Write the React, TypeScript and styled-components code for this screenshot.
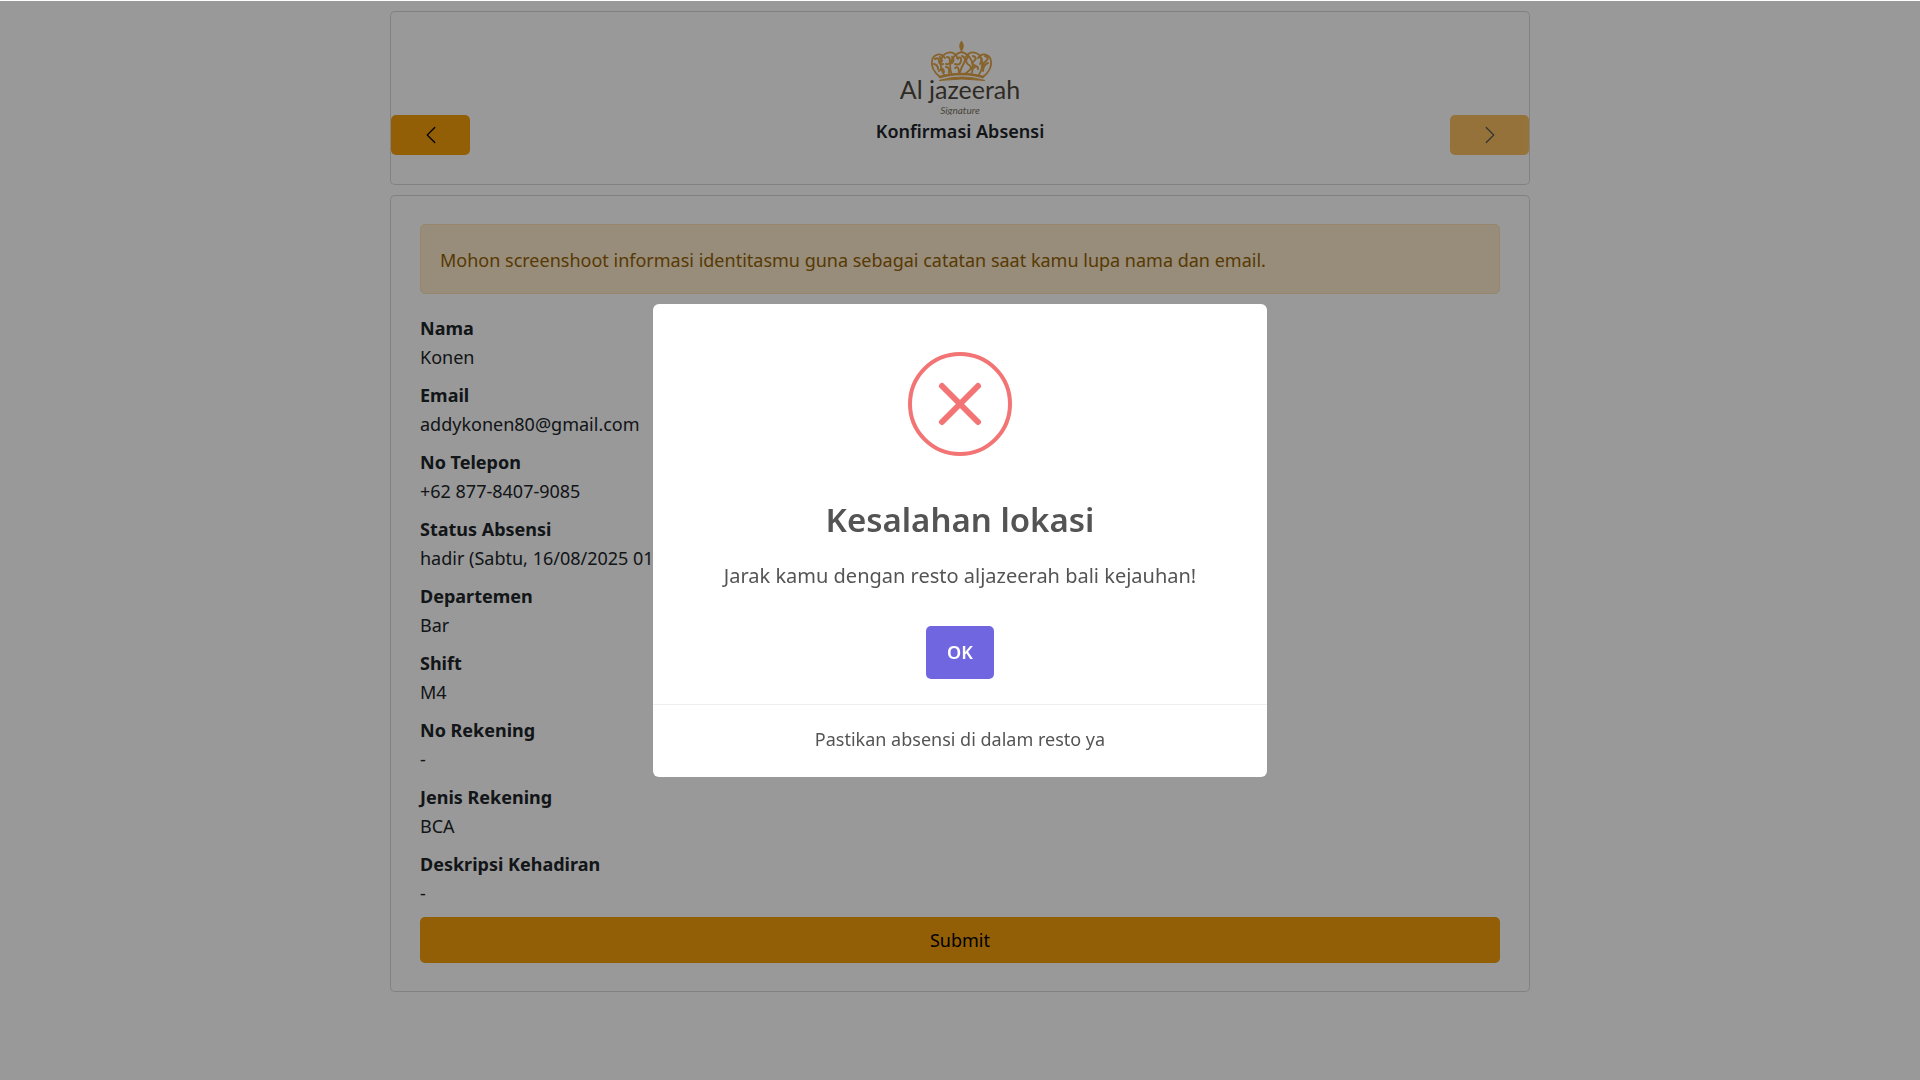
import React, { useState } from 'react';
import styled, { createGlobalStyle } from 'styled-components';

const GlobalStyle = createGlobalStyle`
  *, *::before, *::after { box-sizing: border-box; }
  body {
    margin: 0;
    background: #fff;
    color: #212529;
    font-family: "Noto Sans", "Open Sans", sans-serif;
    font-size: 18px;
    line-height: 29px;
  }
  button { font: inherit; cursor: pointer; }
`;

const Page = styled.main`
  display: flex;
  flex-direction: column;
  gap: 10px;
  max-width: 1140px;
  margin: 0 auto;
  padding: 11px 0;
`;

const Card = styled.section`
  border: 1px solid rgba(0, 0, 0, 0.15);
  border-radius: 5px;
  background: #fff;
  padding: 28px 29px;
`;

const HeaderCard = styled(Card)`
  display: flex;
  flex-direction: column;
  align-items: stretch;
  padding: 28px 0;
`;

const LogoImage = styled.svg`
  display: block;
  align-self: center;
  width: 120px;
  height: 75px;
`;

const LogoName = styled.text`
  font-family: Lato, "Noto Sans", sans-serif;
  font-size: 25px;
  font-weight: 400;
`;

const LogoTagline = styled.text`
  font-family: Lato, "Noto Sans", sans-serif;
  font-size: 10px;
  font-style: italic;
  font-weight: 400;
`;

const StepRow = styled.div`
  display: flex;
  justify-content: space-between;
  align-items: flex-start;
  min-height: 41px;
`;

const StepTitle = styled.h1`
  margin: 0;
  font-size: 18px;
  font-weight: 600;
  line-height: 32px;
`;

const PrimaryButton = styled.button`
  display: inline-flex;
  align-items: center;
  justify-content: center;
  border: 0;
  border-radius: 5px;
  background: #f59e0b;
  color: #000;

  &:disabled {
    opacity: 0.65;
    cursor: default;
  }
`;

const StepButton = styled(PrimaryButton)`
  width: 79px;
  height: 40px;
  padding: 0;
`;

const SubmitButton = styled(PrimaryButton)`
  width: 100%;
  height: 46px;
`;

const Notice = styled.div`
  margin-bottom: 20px;
  padding: 21px 19px 19px;
  border: 1px solid #fbe0b4;
  border-radius: 5px;
  background: #fceccb;
  color: #935f07;
  line-height: 28px;
`;

const Details = styled.dl`
  margin: 0;
`;

const Field = styled.div`
  padding-bottom: 9px;
`;

const FieldLabel = styled.dt`
  font-weight: 700;
`;

const FieldValue = styled.dd`
  margin: 0;
`;

const Backdrop = styled.div`
  position: fixed;
  inset: 1px 0 0;
  display: flex;
  align-items: center;
  justify-content: center;
  background: rgba(0, 0, 0, 0.4);
`;

const Dialog = styled.div`
  display: flex;
  flex-direction: column;
  align-items: center;
  width: 614px;
  max-width: 100%;
  padding-top: 48px;
  border-radius: 6px;
  background: #fff;
  color: #545454;
  text-align: center;
`;

const ErrorMark = styled.svg`
  display: block;
  width: 104px;
  height: 104px;
`;

const DialogTitle = styled.h2`
  margin: 44px 0 0;
  font-size: 33px;
  font-weight: 600;
  line-height: 40px;
`;

const DialogText = styled.p`
  margin: 21px 0 0;
  font-size: 20px;
  line-height: 30px;
`;

const ConfirmButton = styled.button`
  width: 68px;
  height: 53px;
  margin: 35px 0 25px;
  padding: 0;
  border: 0;
  border-radius: 5px;
  background: #7066e0;
  color: #fff;
  font-weight: 600;
`;

const DialogFooter = styled.div`
  align-self: stretch;
  padding: 20px 18px 24px;
  border-top: 1px solid #eee;
  line-height: 28px;
`;

const fields = [
  { label: 'Nama', value: 'Konen' },
  { label: 'Email', value: 'addykonen80@gmail.com' },
  { label: 'No Telepon', value: '+62 877-8407-9085' },
  { label: 'Status Absensi', value: 'hadir (Sabtu, 16/08/2025 01' },
  { label: 'Departemen', value: 'Bar' },
  { label: 'Shift', value: 'M4' },
  { label: 'No Rekening', value: '-' },
  { label: 'Jenis Rekening', value: 'BCA' },
  { label: 'Deskripsi Kehadiran', value: '-' },
];

function Logo() {
  return (
    <LogoImage viewBox="0 0 120 75" role="img" aria-label="Al jazeerah Signature">
      <g fill="none" stroke="#e2a548" strokeLinecap="round" strokeLinejoin="round">
        <path d="M40 37 C35 33 31 27 32 21 C33 14 41 12 45 18 M83 37 C88 33 92 27 91 21 C90 14 82 12 78 18" strokeWidth="1.8" />
        <path d="M45 36 C39 28 39 16 47 13 C53 11 57 15 58 19 M78 36 C84 28 84 16 76 13 C70 11 66 15 65 19" strokeWidth="1.8" />
        <path d="M52 35 C47 24 53 14 61.5 12 C70 14 76 24 71 35" strokeWidth="1.8" />
        <path d="M40 37 C53 33 70 33 83 37" strokeWidth="2.4" />
        <path d="M35 19 q4 -2 4 2 t4 3 M34 24 q4 1 4 5 M40 17 l2 4 M39 31 q4 -5 5 1 M47 17 q3 0 3 4 t-4 3 M46 27 q4 0 3 6 M52 17 q3 3 0 6 M57 18 q5 -2 4 3 t-6 3 M55 28 q4 -3 4 5 M62 16 q5 2 2 7 t-4 9 M68 17 q-4 5 1 8 t-3 8 M73 16 q5 2 1 5 t2 5 M72 29 q6 -5 6 0 M80 17 q3 3 0 7 M85 16 q5 2 1 5 t-4 6 M88 23 q-5 2 -5 8" strokeWidth="2" />
      </g>
      <path d="M61.5 0.5 C64 4 65 7 61.5 11.5 C58 7 59 4 61.5 0.5 Z" fill="#e2a548" />
      <path d="M39 40.5 Q61.5 33.5 85 40.5 Q61.5 37.500 39 40.500 Z" fill="#e2a548" stroke="#e2a548" />
      <LogoName x="60" y="59" textAnchor="middle" fill="#4f493d">
        Al jazeerah
      </LogoName>
      <LogoTagline x="60" y="74" textAnchor="middle" fill="#78725f">
        Signature
      </LogoTagline>
    </LogoImage>
  );
}

function Chevron({ direction }: { direction: 'left' | 'right' }) {
  const d =
    direction === 'left'
      ? 'M11.354 1.646a.5.5 0 0 1 0 .708L5.707 8l5.647 5.646a.5.5 0 0 1-.708.708l-6-6a.5.5 0 0 1 0-.708l6-6a.5.5 0 0 1 .708 0z'
      : 'M4.646 1.646a.5.5 0 0 1 .708 0l6 6a.5.5 0 0 1 0 .708l-6 6a.5.5 0 0 1-.708-.708L10.293 8 4.646 2.354a.5.5 0 0 1 0-.708z';
  return (
    <svg width="20" height="20" viewBox="0 0 16 16" fill="currentColor" aria-hidden="true">
      <path d={d} />
    </svg>
  );
}

export default function App() {
  const [open, setOpen] = useState(true);

  return (
    <>
      <GlobalStyle />
      <Page>
        <HeaderCard>
          <Logo />
          <StepRow>
            <StepButton type="button" aria-label="Kembali">
              <Chevron direction="left" />
            </StepButton>
            <StepTitle>Konfirmasi Absensi</StepTitle>
            <StepButton type="button" aria-label="Lanjut" disabled>
              <Chevron direction="right" />
            </StepButton>
          </StepRow>
        </HeaderCard>
        <Card>
          <Notice role="note">
            Mohon screenshoot informasi identitasmu guna sebagai catatan saat kamu lupa nama dan email.
          </Notice>
          <Details>
            {fields.map((field) => (
              <Field key={field.label}>
                <FieldLabel>{field.label}</FieldLabel>
                <FieldValue>{field.value}</FieldValue>
              </Field>
            ))}
          </Details>
          <SubmitButton type="button">Submit</SubmitButton>
        </Card>
      </Page>
      {open && (
        <Backdrop>
          <Dialog role="dialog" aria-modal="true" aria-labelledby="dialog-title">
            <ErrorMark viewBox="0 0 104 104" fill="none" stroke="#f27474" aria-hidden="true">
              <circle cx="52" cy="52" r="50" strokeWidth="4" />
              <path d="M34 34 L70 70 M70 34 L34 70" strokeWidth="6" strokeLinecap="round" />
            </ErrorMark>
            <DialogTitle id="dialog-title">Kesalahan lokasi</DialogTitle>
            <DialogText>Jarak kamu dengan resto aljazeerah bali kejauhan!</DialogText>
            <ConfirmButton type="button" onClick={() => setOpen(false)}>
              OK
            </ConfirmButton>
            <DialogFooter>Pastikan absensi di dalam resto ya</DialogFooter>
          </Dialog>
        </Backdrop>
      )}
    </>
  );
}
